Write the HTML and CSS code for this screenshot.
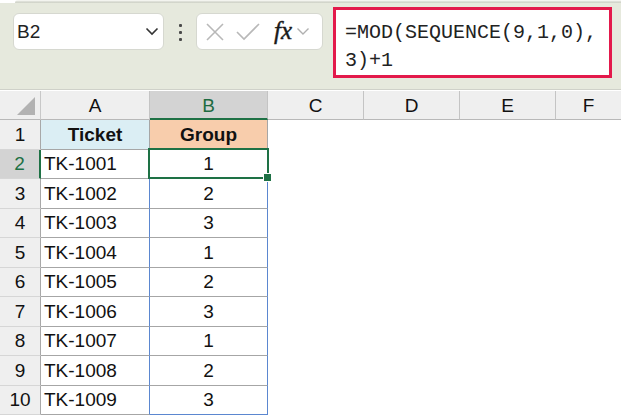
FILE: index.html
```html
<!DOCTYPE html>
<html>
<head>
<meta charset="utf-8">
<link rel="stylesheet" href="styles.css">
</head>
<body>
<div class="app">
  <div class="topstrip"></div>
  <div class="toolbar">
    <div class="namebox">
      <span class="ref">B2</span>
      <svg class="chev" width="14" height="9" viewBox="0 0 14 9"><path d="M1.5 1.5 L7 7 L12.5 1.5" fill="none" stroke="#333" stroke-width="1.6"/></svg>
    </div>
    <div class="dots"><i></i><i></i><i></i></div>
    <div class="fxbox">
      <svg width="20" height="20" viewBox="0 0 20 20"><path d="M2 2 L18 18 M18 2 L2 18" stroke="#b8b8b8" stroke-width="1.6" fill="none"/></svg>
      <svg width="26" height="20" viewBox="0 0 26 20"><path d="M2 10 L9 17 L24 2" stroke="#b8b8b8" stroke-width="1.6" fill="none"/></svg>
      <span class="fx">fx</span>
      <svg width="14" height="9" viewBox="0 0 14 9"><path d="M1.5 1.5 L7 7 L12.5 1.5" fill="none" stroke="#b0b0b0" stroke-width="1.4"/></svg>
    </div>
    <div class="formula">=MOD(SEQUENCE(9,1,0),<br>3)+1</div>
  </div>
  <div class="grid">
    <div class="c corner"><span class="tri"></span></div>
    <div class="c ch">A</div>
    <div class="c ch sel">B</div>
    <div class="c ch">C</div>
    <div class="c ch">D</div>
    <div class="c ch">E</div>
    <div class="c ch last">F</div>

    <div class="c rh">1</div>
    <div class="c ta hdr-a">Ticket</div>
    <div class="c tb hdr-b">Group</div>
    <div class="c e"></div><div class="c e"></div><div class="c e"></div><div class="c e"></div>

    <div class="c rh selr">2</div>
    <div class="c ta">TK-1001</div>
    <div class="c tb active">1</div>
    <div class="c e"></div><div class="c e"></div><div class="c e"></div><div class="c e"></div>

    <div class="c rh">3</div>
    <div class="c ta">TK-1002</div>
    <div class="c tb">2</div>
    <div class="c e"></div><div class="c e"></div><div class="c e"></div><div class="c e"></div>

    <div class="c rh">4</div>
    <div class="c ta">TK-1003</div>
    <div class="c tb">3</div>
    <div class="c e"></div><div class="c e"></div><div class="c e"></div><div class="c e"></div>

    <div class="c rh">5</div>
    <div class="c ta">TK-1004</div>
    <div class="c tb">1</div>
    <div class="c e"></div><div class="c e"></div><div class="c e"></div><div class="c e"></div>

    <div class="c rh">6</div>
    <div class="c ta">TK-1005</div>
    <div class="c tb">2</div>
    <div class="c e"></div><div class="c e"></div><div class="c e"></div><div class="c e"></div>

    <div class="c rh">7</div>
    <div class="c ta">TK-1006</div>
    <div class="c tb">3</div>
    <div class="c e"></div><div class="c e"></div><div class="c e"></div><div class="c e"></div>

    <div class="c rh">8</div>
    <div class="c ta">TK-1007</div>
    <div class="c tb">1</div>
    <div class="c e"></div><div class="c e"></div><div class="c e"></div><div class="c e"></div>

    <div class="c rh">9</div>
    <div class="c ta">TK-1008</div>
    <div class="c tb">2</div>
    <div class="c e"></div><div class="c e"></div><div class="c e"></div><div class="c e"></div>

    <div class="c rh">10</div>
    <div class="c ta lastrow">TK-1009</div>
    <div class="c tb lastrow">3</div>
    <div class="c e"></div><div class="c e"></div><div class="c e"></div><div class="c e"></div>
  </div>
</div>
</body>
</html>
```

FILE: styles.css
```css
* { box-sizing: border-box; }
html, body { margin: 0; padding: 0; }
body {
  width: 621px;
  height: 418px;
  overflow: hidden;
  background: #ffffff;
  font-family: "Liberation Sans", Arial, sans-serif;
  color: #111;
}
.app { width: 621px; }

.topstrip {
  height: 3px;
  background: linear-gradient(to bottom, #f3f4ef 0, #f3f4ef 1px, #c9ccc2 2px, #dcdfd4 3px);
  margin-left: 15px;
  border-top-left-radius: 4px;
}
.toolbar {
  height: 87px;
  background: #e6e9dd;
  border-bottom: 1px solid #cfd1c9;
  display: flex;
  align-items: flex-start;
  padding-left: 13px;
}
.namebox {
  margin-top: 10px;
  width: 151px;
  height: 37px;
  background: #fff;
  border: 1px solid #d6d8d0;
  border-radius: 6px;
  display: flex;
  align-items: center;
  justify-content: space-between;
  padding: 0 4px 0 3px;
  font-size: 19px;
  color: #222;
}
.namebox .ref { padding-top: 1px; }
.dots {
  width: 32px;
  margin-top: 21px;
  display: flex;
  flex-direction: column;
  align-items: center;
  gap: 4px;
}
.dots i {
  display: block;
  width: 3px;
  height: 3px;
  background: #4a4a4a;
  border-radius: 1px;
}
.fxbox {
  margin-top: 10px;
  width: 127px;
  height: 37px;
  background: #fff;
  border: 1px solid #d6d8d0;
  border-radius: 6px;
  display: flex;
  align-items: center;
  padding-left: 8px;
  gap: 0;
}
.fxbox svg:nth-child(1) { margin-right: 10px; }
.fxbox svg:nth-child(2) { margin-right: 13px; }
.fx {
  font-family: "Liberation Serif", "Times New Roman", serif;
  font-style: italic;
  font-size: 25px;
  color: #1a1a1a;
  margin-right: 4px;
  line-height: 1;
  margin-top: -3px;
  -webkit-text-stroke: 0.4px #1a1a1a;
}
.formula {
  margin-left: 10px;
  margin-top: 4px;
  width: 279px;
  height: 71px;
  background: #fff;
  border: 3px solid #e3194b;
  font-family: "Liberation Mono", "DejaVu Sans Mono", monospace;
  font-size: 20px;
  line-height: 28px;
  padding: 9px 0 0 9px;
  color: #222;
  white-space: nowrap;
}

.grid {
  display: grid;
  grid-template-columns: 41px 109px 118px 96px 96px 96px 65px;
  grid-template-rows: 29px repeat(10, 29.5px);
  margin-top: 1px;
}
.c {
  display: flex;
  align-items: center;
  font-size: 19px;
  line-height: 1;
  white-space: nowrap;
}
.corner {
  background: #efefef;
  border-right: 1px solid #c8c8c8;
  border-bottom: 1px solid #b8b8b8;
  position: relative;
}
.tri {
  position: absolute;
  right: 5px;
  bottom: 4px;
  width: 0;
  height: 0;
  border-left: 18px solid transparent;
  border-bottom: 18px solid #b2b2b2;
}
.ch {
  background: #efefef;
  justify-content: center;
  border-right: 1px solid #c4c4c4;
  border-bottom: 1px solid #b8b8b8;
  color: #111;
  padding-top: 1px;
}
.ch.last { border-right: none; }
.ch.sel {
  background: #d3d3d3;
  color: #1e6b41;
  border-bottom: 2px solid #1e7145;
  padding-top: 2px;
}
.rh {
  background: #efefef;
  justify-content: center;
  border-right: 1px solid #a8a8a8;
  border-bottom: 1px solid #d6d6d6;
  color: #111;
}
.rh.selr {
  background: #d3d3d3;
  color: #1e7145;
  border-right: 2px solid #1e7145;
}
.ta {
  padding-left: 3px;
  border-right: 1px solid #5b87d0;
  border-bottom: 1px solid #a6a6a6;
}
.tb {
  justify-content: center;
  border-right: 1px solid #5b87d0;
  border-bottom: 1px solid #a6a6a6;
}
.hdr-a {
  background: #dbeef4;
  font-weight: bold;
  justify-content: center;
  padding-left: 0;
  border-right: 1px solid #a6a6a6;
}
.hdr-b {
  background: #f8cdac;
  font-weight: bold;
  border-right: 1px solid #a6a6a6;
}
.tb.lastrow { border-bottom: 1px solid #5b87d0; }
.ta.lastrow { border-bottom: 1px solid #a6a6a6; }
.e { background: #fff; }

.active { position: relative; }
.active::before {
  content: "";
  position: absolute;
  left: -2px;
  top: -2px;
  right: -2px;
  bottom: -1px;
  border: 2px solid #1e7145;
}
.active::after {
  content: "";
  position: absolute;
  right: -5px;
  bottom: -4px;
  width: 7px;
  height: 7px;
  background: #1e7145;
  border: 1px solid #fff;
}
```
